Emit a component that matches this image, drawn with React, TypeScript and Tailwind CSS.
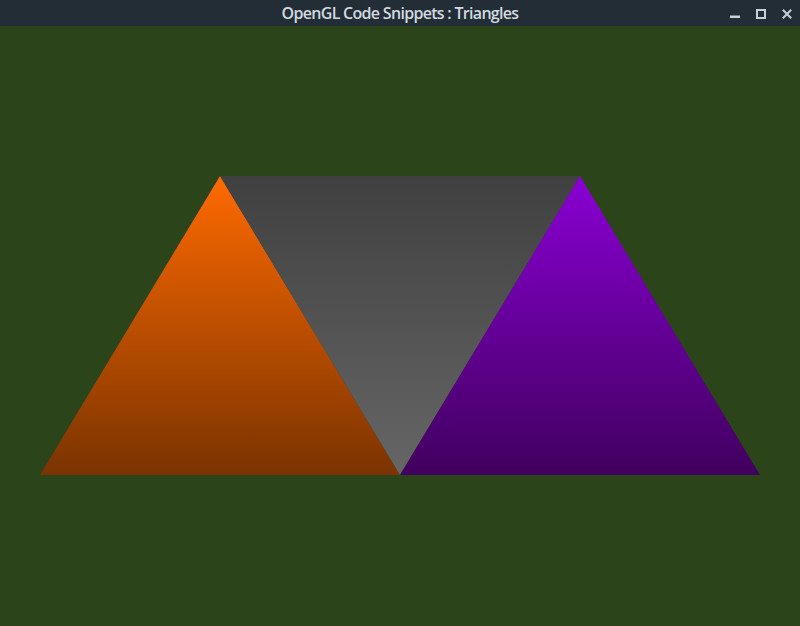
import React from "react";

type Tri = {
  id: string;
  points: string;
  top: string;
  bottom: string;
};

const triangles: Tri[] = [
  { id: "orange", points: "220,150 40,449 400,449", top: "#ff6a00", bottom: "#7a3300" },
  { id: "gray", points: "220,150 580,150 400,449", top: "#404040", bottom: "#666666" },
  { id: "purple", points: "580,150 400,449 760,449", top: "#8a00d4", bottom: "#40005e" },
];

const TitleBar = () => {
  return (
    <div className="h-[26px] bg-[#222d35] flex items-center relative shrink-0">
      <span
        className="flex-1 text-center text-[16px] font-semibold tracking-[-0.7px] leading-none text-[#d3dae0] pb-[1px]"
        style={{ fontFamily: '"Open Sans", "Noto Sans", sans-serif' }}
      >
        OpenGL Code Snippets : Triangles
      </span>
      {/* window buttons */}
      <div className="absolute right-[8px] top-[9px] flex gap-4">
        <svg width="10" height="10" viewBox="0 0 10 10">
          <rect x="0" y="6.5" width="10" height="2.5" fill="#c8d0d6" />
        </svg>
        <svg width="10" height="10" viewBox="0 0 10 10">
          <rect x="1" y="1" width="8" height="8" fill="none" stroke="#c8d0d6" strokeWidth="2" />
        </svg>
        <svg width="10" height="10" viewBox="0 0 10 10">
          <path d="M0.8 0.8 L9.2 9.2 M9.2 0.8 L0.8 9.2" stroke="#c8d0d6" strokeWidth="2" />
        </svg>
      </div>
    </div>
  );
};

export default function App() {
  return (
    <div className="w-[800px] h-[626px] flex flex-col bg-[#2c4419] overflow-hidden">
      <TitleBar />
      <div className="flex-1">
        <svg width="800" height="600" viewBox="0 0 800 600" className="block">
          <defs>
            {triangles.map((t) => (
              <linearGradient
                key={t.id}
                id={`g-${t.id}`}
                gradientUnits="userSpaceOnUse"
                x1="0"
                y1="150"
                x2="0"
                y2="449"
              >
                <stop offset="0" stopColor={t.top} />
                <stop offset="1" stopColor={t.bottom} />
              </linearGradient>
            ))}
          </defs>
          {triangles.map((t) => (
            <polygon key={t.id} points={t.points} fill={`url(#g-${t.id})`} />
          ))}
        </svg>
      </div>
    </div>
  );
}
